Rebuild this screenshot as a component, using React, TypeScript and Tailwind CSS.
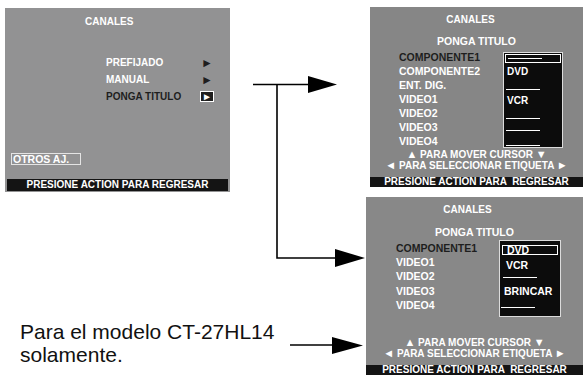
const sans = 'font-["Liberation_Sans",Arial,Helvetica,sans-serif]'

function Line({ className = '' }: { className?: string }) {
  return <span className={`block h-px w-[34px] bg-white ${className}`} />
}

function Footer({ label }: { label: string }) {
  return (
    <div className="mt-auto flex flex-col items-center">
      <div className="flex flex-col items-center leading-[11px] text-white">
        <div>
          <span className="text-[11px]">▲</span> PARA MOVER CURSOR <span className="text-[11px]">▼</span>
        </div>
        <div>
          <span className="text-[11px]">◄</span> PARA SELECCIONAR ETIQUETA <span className="text-[11px]">►</span>
        </div>
      </div>
      <div className="mt-[6px] flex h-[10px] w-full items-center justify-center bg-[#141414] leading-[10px] whitespace-pre text-white">{label}</div>
    </div>
  )
}

function MainMenu() {
  const items = [
    { label: 'PREFIJADO', active: false },
    { label: 'MANUAL', active: false },
    { label: 'PONGA TITULO', active: true },
  ]
  return (
    <div className="absolute left-[5px] top-[8px] flex h-[184px] w-[225px] flex-col bg-[#929293] text-[10px] leading-[12px] font-bold">
      <div className="pt-[8px] pl-[80px] text-white">CANALES</div>
      <div className="mt-[26px] ml-[101px] flex w-[108px] flex-col">
        {items.map((item) => (
          <div key={item.label} className="flex h-[17px] items-center justify-between">
            <span className={item.active ? 'text-[#1e1e1e]' : 'text-white'}>{item.label}</span>
            {item.active ? (
              <span className="flex h-[11px] w-[14px] items-center justify-center border border-white bg-[#1e1e1e] text-[10px] leading-none text-white">►</span>
            ) : (
              <span className="flex w-[14px] justify-center text-[12px] text-[#1e1e1e]">►</span>
            )}
          </div>
        ))}
      </div>
      <div className="mt-auto ml-[6px] flex h-[12px] w-[70px] items-center border border-[#e4e4e4] pl-[1px] text-[10.5px] leading-[10px] text-white">OTROS AJ.</div>
      <div className="mx-[2px] mt-[14px] mb-[1px] flex h-[12px] items-center justify-center bg-[#141414] text-white">PRESIONE ACTION PARA REGRESAR</div>
    </div>
  )
}

function TitleScreenFull() {
  const names = ['COMPONENTE1', 'COMPONENTE2', 'ENT. DIG.', 'VIDEO1', 'VIDEO2', 'VIDEO3', 'VIDEO4']
  return (
    <div className="absolute left-[370px] top-[7px] flex h-[180px] w-[213px] flex-col bg-[#868686] text-[10px] leading-[12px] font-bold">
      <div className="pt-[7px] pr-[12px] text-center text-white">CANALES</div>
      <div className="mt-[9px] text-center text-[10.5px] text-white">PONGA TITULO</div>
      <div className="mt-[3px] flex items-start">
        <div className="ml-[29px] flex w-[104px] flex-col text-[10.5px]">
          {names.map((name, i) => (
            <div key={name} className={`flex h-[14px] items-center ${i === 0 ? 'text-[#1e1e1e]' : 'text-white'}`}>{name}</div>
          ))}
        </div>
        <div className="mt-[2px] flex h-[96px] w-[60px] flex-col border border-[#dcdcdc] bg-[#0c0c0c] pt-px text-[10px] text-white">
          <div className="mx-px flex h-[9px] items-center border border-white pl-[2px]">
            <Line />
          </div>
          <div className="mt-[3px] h-[12px] pl-[3px]">DVD</div>
          <Line className="mt-[11px] ml-[2px]" />
          <div className="mt-[5px] h-[12px] pl-[3px]">VCR</div>
          <Line className="mt-[11px] ml-[2px]" />
          <Line className="mt-[11px] ml-[2px]" />
          <Line className="mt-[14px] ml-[2px]" />
        </div>
      </div>
      <Footer label="PRESIONE ACTION PARA  REGRESAR" />
    </div>
  )
}

function TitleScreenShort() {
  const names = ['COMPONENTE1', 'VIDEO1', 'VIDEO2', 'VIDEO3', 'VIDEO4']
  return (
    <div className="absolute left-[366px] top-[197px] flex h-[178px] w-[217px] flex-col bg-[#888888] text-[10px] leading-[12px] font-bold">
      <div className="pt-[7px] pr-[14px] text-center text-white">CANALES</div>
      <div className="mt-[10px] text-center text-[10.5px] text-white">PONGA TITULO</div>
      <div className="mt-[3px] flex items-start">
        <div className="ml-[30px] flex w-[103px] flex-col text-[10.5px]">
          {names.map((name, i) => (
            <div key={name} className={`flex h-[14.2px] items-center ${i === 0 ? 'text-[#1e1e1e]' : 'text-white'}`}>{name}</div>
          ))}
        </div>
        <div className="-mt-px flex h-[77px] w-[62px] flex-col border border-[#dcdcdc] bg-[#0c0c0c] pt-[4px] text-[10.5px] text-white">
          <div className="mx-[2px] flex h-[10px] items-center border border-white pl-[4px] leading-none">DVD</div>
          <div className="mt-[4px] h-[12px] pl-[6px]">VCR</div>
          <Line className="mt-[5.5px] ml-[3px]" />
          <div className="mt-[7.5px] h-[12px] pl-[4px]">BRINCAR</div>
          <Line className="mt-[10px] ml-[1px]" />
        </div>
      </div>
      <Footer label="PRESIONE ACTION PARA  REGRESAR" />
    </div>
  )
}

function Arrows() {
  return (
    <svg className="pointer-events-none absolute inset-0" width="585" height="375" viewBox="0 0 585 375">
      <g stroke="#000" strokeWidth="1.6" fill="none">
        <path d="M253 84.5 H310" />
        <path d="M277 84.5 V258 H336" />
        <path d="M290 345 H333" />
      </g>
      <g fill="#000">
        <polygon points="308,76 337,84.5 308,93" />
        <polygon points="335,249 365,258 335,267" />
        <polygon points="332,337 363,345.5 332,354" />
      </g>
    </svg>
  )
}

export default function App() {
  return (
    <div className={`relative h-[375px] w-[585px] overflow-hidden bg-white ${sans}`}>
      <MainMenu />
      <TitleScreenFull />
      <TitleScreenShort />
      <Arrows />
      <div className="absolute left-[20px] top-[320px] text-[21px] leading-[23px] text-[#111]">
        <div>Para el modelo CT-27HL14</div>
        <div>solamente.</div>
      </div>
    </div>
  )
}
